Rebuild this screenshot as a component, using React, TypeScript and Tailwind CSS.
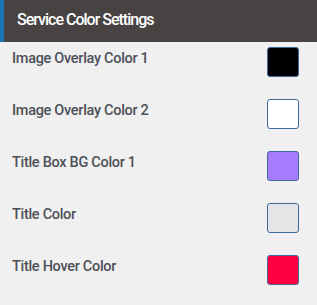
import React from "react";

const rows = [
  { label: "Image Overlay Color 1", color: "bg-[#000000]" },
  { label: "Image Overlay Color 2", color: "bg-[#ffffff]" },
  { label: "Title Box BG Color 1", color: "bg-[#a57cfb]" },
  { label: "Title Color", color: "bg-[#e5e5e5]" },
  { label: "Title Hover Color", color: "bg-[#ff0040]" },
];

export default function App() {
  return (
    <div className="w-[317px] h-[305px] bg-[#f0f0f0]" style={{ fontFamily: "Roboto, 'Liberation Sans', sans-serif" }}>
      <div className="h-[42px] bg-[#474343] border-l-4 border-[#1a73b5] flex items-center pl-[13px]">
        <span className="text-white text-[16px] font-medium tracking-[-1px] leading-[20px] mt-[-2px]">Service Color Settings</span>
      </div>
      <div className="flex flex-col gap-[22px] pt-[5px] pl-[12px] pr-[18px]">
        {rows.map((r) => (
          <div key={r.label} className="h-[30px] flex items-start justify-between">
            <span className="text-[14.5px] font-medium text-[#4d5059] leading-[16px] mt-[4px] tracking-[-0.3px]">{r.label}</span>
            <div className={`w-[32px] h-[30px] rounded-[3px] border border-[#3d6a9a] ${r.color}`} />
          </div>
        ))}
      </div>
    </div>
  );
}
